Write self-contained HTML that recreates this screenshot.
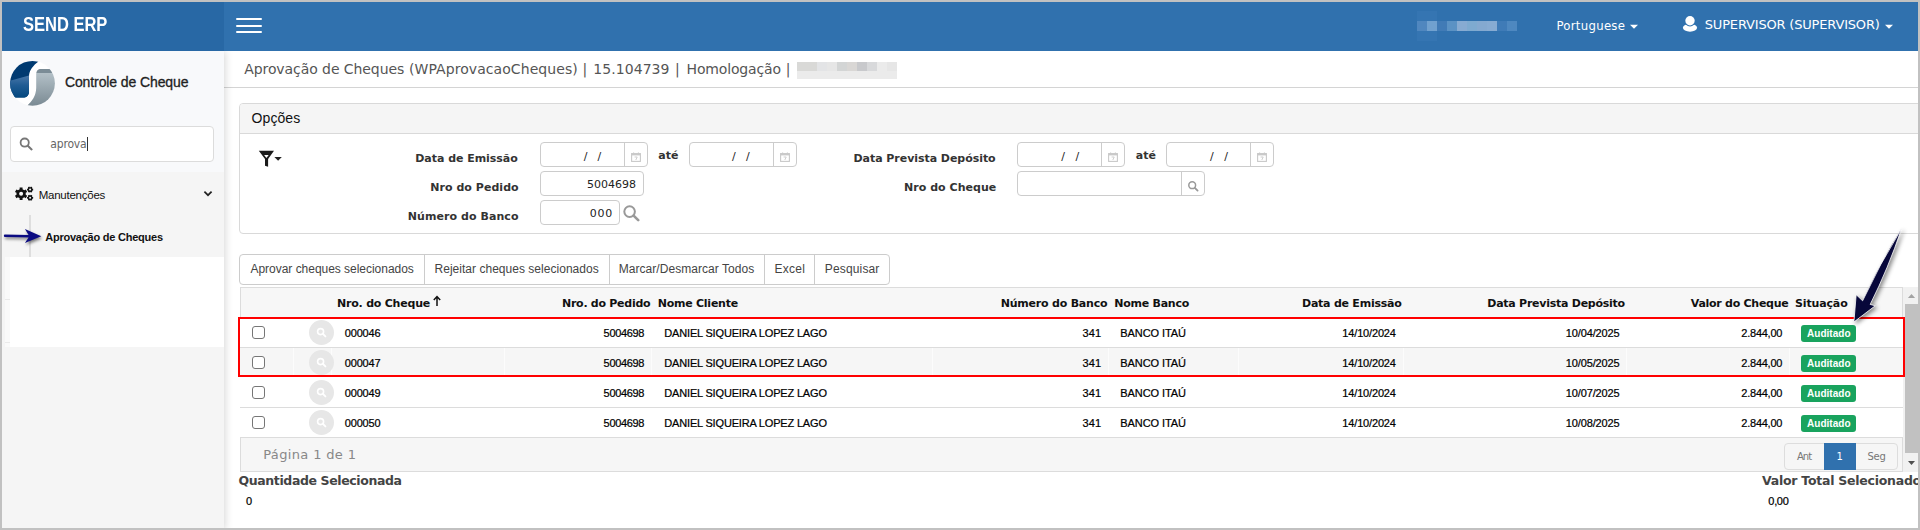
<!DOCTYPE html>
<html lang="pt-BR">
<head>
<meta charset="utf-8">
<title>SEND ERP - Aprovação de Cheques</title>
<style>
html,body{margin:0;padding:0}
body{width:1920px;height:530px;overflow:hidden;position:relative;background:#fff;font-family:"Liberation Sans",sans-serif}
*{box-sizing:border-box}
.a{position:absolute}
.t{position:absolute;white-space:pre;line-height:0;margin:0;padding:0;font-style:normal}
h1.t,h2.t{font-weight:normal}
h1.ttl{position:absolute;left:0;top:0;margin:0;font-weight:normal;font-size:14px}
.frame{position:absolute;left:0;top:0;width:1920px;height:530px;border:2px solid #c1c1c1;z-index:100;pointer-events:none}
header{position:absolute;left:0;top:0;width:1920px;height:51px;background:#3071ae;z-index:5}
.brand{position:absolute;left:0;top:0;width:224px;height:51px;background:#2868a5}
.burger{position:absolute;left:236px;top:18px;width:26px;height:15px;border:0;padding:0;background:none}
.burger i{position:absolute;left:0;width:26px;height:2px;background:#fff;border-radius:1px}
aside{position:absolute;left:0;top:51px;width:224px;height:479px;background:#f5f5f5;box-shadow:1px 0 8px rgba(0,0,0,.17);z-index:4}
.side-top{position:absolute;left:0;top:0;width:224px;height:121px;background:#f8f9fb}
.search{position:absolute;left:10px;top:75px;width:204px;height:36px;background:#fff;border:1px solid #dcdcdc;border-radius:4px}
.blank{position:absolute;left:10px;top:206px;width:214px;height:90px;background:#fff}
.subline{position:absolute;left:29px;top:164px;width:2px;height:42px;background:#dedede}
main{position:absolute;left:0;top:0;width:1920px;height:530px}
.titlebar{position:absolute;left:224px;top:87px;width:1696px;height:1px;background:#d4d4d4}
.panel{position:absolute;left:239px;top:103px;width:1690px;height:131px;border:1px solid #d9d9d9;border-radius:4px;background:#fff}
.panel-h{position:absolute;left:0;top:0;width:100%;height:30px;background:#f5f5f5;border-bottom:1px solid #d9d9d9;border-radius:3px 3px 0 0}
.inp{position:absolute;height:25px;border:1px solid #ccc;border-radius:4px;background:#fff}
.inp b{position:absolute;top:0;width:1px;height:23px;background:#ccc}
.btns{position:absolute;left:239px;top:254px;width:651px;height:31px;border:1px solid #ccc;border-radius:4px;background:#fff}
.btns i{position:absolute;top:0;width:1px;height:29px;background:#ccc}
.grid{position:absolute;left:240px;top:287px;width:1663px;height:185px;background:#fff}
.grid .hd{position:absolute;left:0;top:0;width:1663px;height:31px;background:#f7f7f7;border:1px solid #dcdcdc;border-bottom:0}
.row{position:absolute;left:0;width:1663px;border-bottom:1px solid #dcdcdc}
.row.alt{background:#f6f6f6}
.row.alt u{position:absolute;top:0;width:1px;height:27px;background:#fcfcfc}
.ck{position:absolute;left:252px;width:13px;height:13px;border:1px solid #767676;border-radius:3px;background:#fff;margin:0;padding:0;appearance:none;-webkit-appearance:none}
.circ{position:absolute;left:309px;width:25px;height:25px;border-radius:50%;background:#e7e7e7}
.badge{position:absolute;left:1801px;width:55px;height:17px;border-radius:3px;background:#19a35e}
.foot{position:absolute;left:0;top:150px;width:1663px;height:35px;background:#f6f6f6;border:1px solid #dcdcdc}
.pager{position:absolute;left:1784px;top:443px;width:114px;height:27px;border:1px solid #ddd;border-radius:4px;background:#f6f6f6}
.pager em{position:absolute;left:39px;top:-1px;width:32px;height:27px;background:#3071ae}
.redbox{position:absolute;left:238px;top:317px;width:1667px;height:60px;border:2px solid #ff0000;z-index:3}
.sb{position:absolute;left:1903px;top:287px;width:15px;height:185px;background:#f1f1f1}
.sb .th{position:absolute;left:2px;top:17px;width:13px;height:149px;background:#c1c1c1}
.pix i{position:absolute;width:10px}
</style>
</head>
<body>
<main>
  <div class="titlebar"></div>
  <h1 class="ttl">
<span id="t7" class="t" style="left:244.20px;top:69.25px;font-family:'DejaVu Sans',sans-serif;font-size:14px;font-weight:normal;color:#555;letter-spacing:-0.074px;">Aprovação de Cheques</span>
<span id="t8" class="t" style="left:409.00px;top:69.25px;font-family:'DejaVu Sans',sans-serif;font-size:14px;font-weight:normal;color:#555;letter-spacing:0.068px;">(WPAprovacaoCheques)</span>
<span id="t9" class="t" style="left:582.50px;top:69.25px;font-family:'DejaVu Sans',sans-serif;font-size:14px;font-weight:normal;color:#555;letter-spacing:1.500px;">|</span>
<span id="t10" class="t" style="left:593.30px;top:69.25px;font-family:'DejaVu Sans',sans-serif;font-size:14px;font-weight:normal;color:#555;letter-spacing:0.062px;">15.104739</span>
<span id="t11" class="t" style="left:675.00px;top:69.25px;font-family:'DejaVu Sans',sans-serif;font-size:14px;font-weight:normal;color:#555;letter-spacing:1.500px;">|</span>
<span id="t12" class="t" style="left:686.50px;top:69.25px;font-family:'DejaVu Sans',sans-serif;font-size:14px;font-weight:normal;color:#555;letter-spacing:-0.150px;">Homologação</span>
<span id="t13" class="t" style="left:785.80px;top:69.25px;font-family:'DejaVu Sans',sans-serif;font-size:14px;font-weight:normal;color:#555;letter-spacing:1.500px;">|</span>
  </h1>
  <div class="pix" aria-hidden="true">
    <i style="left:797px;top:62px;height:9px;background:#d9d9d7"></i><i style="left:807px;top:62px;height:9px;background:#d9d9d7"></i><i style="left:817px;top:62px;height:9px;background:#e3e4e6"></i><i style="left:827px;top:62px;height:9px;background:#e6e6e6"></i><i style="left:837px;top:62px;height:9px;background:#d3d5d5"></i><i style="left:847px;top:62px;height:9px;background:#d9d7d5"></i><i style="left:857px;top:62px;height:9px;background:#c8c9cc"></i><i style="left:867px;top:62px;height:9px;background:#d8d9db"></i><i style="left:877px;top:62px;height:9px;background:#ebebeb"></i><i style="left:887px;top:62px;height:9px;background:#e6e6e6"></i>
    <i style="left:797px;top:71px;height:8px;width:100px;background:#ebebeb"></i>
  </div>
  <section class="panel">
    <div class="panel-h"></div>
  </section>
  <!-- filter icon -->
  <svg class="a" style="left:258px;top:150px" width="26" height="18" viewBox="0 0 26 18">
    <path d="M0.8 0.8 H16 L10.1 9 V16.7 L7 15.7 V9 Z" fill="#1a1a1a"/>
    <path d="M6.1 5 H10.7 L8.4 8 Z" fill="#fff"/>
    <path d="M16.4 6.9 H23.8 L20.1 10.7 Z" fill="#222"/>
  </svg>
  <!-- inputs -->
  <div class="inp" style="left:540px;top:142px;width:108px"><b style="left:83px"></b></div>
  <div class="inp" style="left:689px;top:142px;width:108px"><b style="left:83px"></b></div>
  <div class="inp" style="left:1017px;top:142px;width:108px"><b style="left:83px"></b></div>
  <div class="inp" style="left:1166px;top:142px;width:108px"><b style="left:83px"></b></div>
  <div class="inp" style="left:540px;top:171px;width:104px"></div>
  <div class="inp" style="left:540px;top:200px;width:80px"></div>
  <div class="inp" style="left:1017px;top:171px;width:188px"><b style="left:163px"></b></div>
  <!-- calendar icons -->
  <svg class="a cal" style="left:630px;top:152px" width="12" height="10" viewBox="0 0 12 10"><use href="#cal"/></svg>
  <svg class="a cal" style="left:779px;top:152px" width="12" height="10" viewBox="0 0 12 10"><use href="#cal"/></svg>
  <svg class="a cal" style="left:1107px;top:152px" width="12" height="10" viewBox="0 0 12 10"><use href="#cal"/></svg>
  <svg class="a cal" style="left:1256px;top:152px" width="12" height="10" viewBox="0 0 12 10"><use href="#cal"/></svg>
  <!-- magnifiers -->
  <svg class="a" style="left:622px;top:204px" width="18" height="18" viewBox="0 0 18 18"><circle cx="7.6" cy="7.6" r="5.3" fill="none" stroke="#999" stroke-width="2"/><path d="M11.6 11.6 L16.2 16.2" stroke="#999" stroke-width="2.6" stroke-linecap="round"/></svg>
  <svg class="a" style="left:1187px;top:180px" width="12" height="12" viewBox="0 0 12 12"><circle cx="5.2" cy="5.2" r="3.4" fill="none" stroke="#999" stroke-width="1.5"/><path d="M7.8 7.8 L10.6 10.6" stroke="#999" stroke-width="1.8" stroke-linecap="round"/></svg>
  <!-- buttons -->
  <div class="btns"><i style="left:184px"></i><i style="left:369px"></i><i style="left:524px"></i><i style="left:574px"></i></div>
  <!-- grid -->
  <div class="grid">
    <div class="hd"></div>
    <div class="row" style="top:32px;height:29px"></div>
    <div class="row alt" style="top:61px;height:29px"><u style="left:53px"></u><u style="left:91px"></u><u style="left:264px"></u><u style="left:411px"></u><u style="left:692px"></u><u style="left:868px"></u><u style="left:998px"></u><u style="left:1163px"></u><u style="left:1386px"></u><u style="left:1549px"></u></div>
    <div class="row" style="top:90px;height:31px"></div>
    <div class="row" style="top:121px;height:30px"></div>
    <div class="foot"></div>
  </div>
  <div class="redbox"></div>
  <input type="checkbox" class="ck" style="top:326px"><input type="checkbox" class="ck" style="top:356px"><input type="checkbox" class="ck" style="top:386px"><input type="checkbox" class="ck" style="top:416px">
  <div class="circ" style="top:320px"><svg width="25" height="25" viewBox="0 0 25 25"><use href="#mg"/></svg></div>
  <div class="circ" style="top:350px"><svg width="25" height="25" viewBox="0 0 25 25"><use href="#mg"/></svg></div>
  <div class="circ" style="top:380px"><svg width="25" height="25" viewBox="0 0 25 25"><use href="#mg"/></svg></div>
  <div class="circ" style="top:410px"><svg width="25" height="25" viewBox="0 0 25 25"><use href="#mg"/></svg></div>
  <div class="badge" style="top:325px"></div><div class="badge" style="top:355px"></div><div class="badge" style="top:385px"></div><div class="badge" style="top:415px"></div>
  <div class="pager"><em></em></div>
  <div class="sb"><div class="th"></div>
    <svg class="a" style="left:2px;top:0" width="13" height="185" viewBox="0 0 13 185"><path d="M2.9 11 L6.5 7 L10.1 11 Z" fill="#a3a3a3"/><path d="M3 174 L10 174 L6.5 178 Z" fill="#505050"/></svg>
  </div>
  <!-- sort arrow -->
  <svg class="a" style="left:432px;top:295px" width="10" height="12" viewBox="0 0 10 12"><path d="M5 11 V2 M1.8 5 L5 1.6 L8.2 5" fill="none" stroke="#111" stroke-width="1.5"/></svg>
<h2 id="t14" class="t" style="left:251.50px;top:118.00px;font-family:'Liberation Sans',sans-serif;font-size:14px;font-weight:normal;color:#111;letter-spacing:0.100px;">Opções</h2>
<label id="t15" class="t" style="left:415.25px;top:159.00px;font-family:'DejaVu Sans',sans-serif;font-size:11px;font-weight:bold;color:#333;letter-spacing:-0.036px;">Data de Emissão</label>
<label id="t16" class="t" style="left:430.25px;top:188.00px;font-family:'DejaVu Sans',sans-serif;font-size:11px;font-weight:bold;color:#333;letter-spacing:0.042px;">Nro do Pedido</label>
<label id="t17" class="t" style="left:407.75px;top:216.75px;font-family:'DejaVu Sans',sans-serif;font-size:11px;font-weight:bold;color:#333;letter-spacing:0.071px;">Número do Banco</label>
<label id="t18" class="t" style="left:853.50px;top:159.00px;font-family:'DejaVu Sans',sans-serif;font-size:11px;font-weight:bold;color:#333;letter-spacing:-0.048px;">Data Prevista Depósito</label>
<label id="t19" class="t" style="left:904.00px;top:188.00px;font-family:'DejaVu Sans',sans-serif;font-size:11px;font-weight:bold;color:#333;letter-spacing:0.042px;">Nro do Cheque</label>
<span id="t20" class="t" style="left:658.25px;top:156.25px;font-family:'DejaVu Sans',sans-serif;font-size:11px;font-weight:bold;color:#333;">até</span>
<span id="t21" class="t" style="left:1135.75px;top:156.25px;font-family:'DejaVu Sans',sans-serif;font-size:11px;font-weight:bold;color:#333;">até</span>
<span id="t22" class="t" style="left:583.75px;top:157.00px;font-family:'DejaVu Sans',sans-serif;font-size:11px;font-weight:normal;color:#222;letter-spacing:1.000px;">/  /</span>
<span id="t23" class="t" style="left:732.00px;top:157.00px;font-family:'DejaVu Sans',sans-serif;font-size:11px;font-weight:normal;color:#222;letter-spacing:1.083px;">/  /</span>
<span id="t24" class="t" style="left:1061.25px;top:157.00px;font-family:'DejaVu Sans',sans-serif;font-size:11px;font-weight:normal;color:#222;letter-spacing:1.167px;">/  /</span>
<span id="t25" class="t" style="left:1210.00px;top:157.00px;font-family:'DejaVu Sans',sans-serif;font-size:11px;font-weight:normal;color:#222;letter-spacing:1.167px;">/  /</span>
<span id="t26" class="t" style="left:587.00px;top:185.00px;font-family:'DejaVu Sans',sans-serif;font-size:11px;font-weight:normal;color:#222;">5004698</span>
<span id="t27" class="t" style="left:589.75px;top:213.75px;font-family:'DejaVu Sans',sans-serif;font-size:11px;font-weight:normal;color:#222;letter-spacing:0.750px;">000</span>
<span id="t28" class="t" style="left:250.50px;top:268.75px;font-family:'Liberation Sans',sans-serif;font-size:12px;font-weight:normal;color:#444;letter-spacing:-0.028px;">Aprovar cheques selecionados</span>
<span id="t29" class="t" style="left:434.50px;top:268.75px;font-family:'Liberation Sans',sans-serif;font-size:12px;font-weight:normal;color:#444;letter-spacing:0.027px;">Rejeitar cheques selecionados</span>
<span id="t30" class="t" style="left:618.75px;top:268.75px;font-family:'Liberation Sans',sans-serif;font-size:12px;font-weight:normal;color:#444;letter-spacing:0.048px;">Marcar/Desmarcar Todos</span>
<span id="t31" class="t" style="left:774.50px;top:268.75px;font-family:'Liberation Sans',sans-serif;font-size:12px;font-weight:normal;color:#444;letter-spacing:0.250px;">Excel</span>
<span id="t32" class="t" style="left:824.75px;top:268.75px;font-family:'Liberation Sans',sans-serif;font-size:12px;font-weight:normal;color:#444;letter-spacing:0.156px;">Pesquisar</span>
<span id="t33" class="t th" style="left:337.00px;top:303.75px;font-family:'DejaVu Sans',sans-serif;font-size:11px;font-weight:bold;color:#111;letter-spacing:-0.212px;">Nro. do Cheque</span>
<span id="t34" class="t th" style="left:562.00px;top:303.75px;font-family:'DejaVu Sans',sans-serif;font-size:11px;font-weight:bold;color:#111;letter-spacing:-0.269px;">Nro. do Pedido</span>
<span id="t35" class="t th" style="left:657.75px;top:303.75px;font-family:'DejaVu Sans',sans-serif;font-size:11px;font-weight:bold;color:#111;letter-spacing:-0.250px;">Nome Cliente</span>
<span id="t36" class="t th" style="left:1000.75px;top:303.75px;font-family:'DejaVu Sans',sans-serif;font-size:11px;font-weight:bold;color:#111;letter-spacing:-0.214px;">Número do Banco</span>
<span id="t37" class="t th" style="left:1114.25px;top:303.75px;font-family:'DejaVu Sans',sans-serif;font-size:11px;font-weight:bold;color:#111;letter-spacing:-0.250px;">Nome Banco</span>
<span id="t38" class="t th" style="left:1302.00px;top:303.75px;font-family:'DejaVu Sans',sans-serif;font-size:11px;font-weight:bold;color:#111;letter-spacing:-0.232px;">Data de Emissão</span>
<span id="t39" class="t th" style="left:1487.25px;top:303.75px;font-family:'DejaVu Sans',sans-serif;font-size:11px;font-weight:bold;color:#111;letter-spacing:-0.250px;">Data Prevista Depósito</span>
<span id="t40" class="t th" style="left:1690.75px;top:303.75px;font-family:'DejaVu Sans',sans-serif;font-size:11px;font-weight:bold;color:#111;letter-spacing:-0.268px;">Valor do Cheque</span>
<span id="t41" class="t th" style="left:1795.00px;top:303.75px;font-family:'DejaVu Sans',sans-serif;font-size:11px;font-weight:bold;color:#111;letter-spacing:-0.143px;">Situação</span>
<span id="t42" class="t" style="left:344.85px;top:333.00px;font-family:'Liberation Sans',sans-serif;font-size:11px;font-weight:normal;color:#000;-webkit-text-stroke:0.22px #000;letter-spacing:-0.200px;">000046</span>
<span id="t43" class="t" style="left:603.60px;top:333.00px;font-family:'Liberation Sans',sans-serif;font-size:11px;font-weight:normal;color:#000;-webkit-text-stroke:0.22px #000;letter-spacing:-0.333px;">5004698</span>
<span id="t44" class="t" style="left:664.35px;top:333.00px;font-family:'Liberation Sans',sans-serif;font-size:11px;font-weight:normal;color:#000;-webkit-text-stroke:0.22px #000;letter-spacing:-0.180px;">DANIEL SIQUEIRA LOPEZ LAGO</span>
<span id="t45" class="t" style="left:1082.60px;top:333.00px;font-family:'Liberation Sans',sans-serif;font-size:11px;font-weight:normal;color:#000;-webkit-text-stroke:0.22px #000;letter-spacing:0.125px;">341</span>
<span id="t46" class="t" style="left:1120.35px;top:333.00px;font-family:'Liberation Sans',sans-serif;font-size:11px;font-weight:normal;color:#000;-webkit-text-stroke:0.22px #000;letter-spacing:-0.083px;">BANCO ITAÚ</span>
<span id="t47" class="t" style="left:1342.35px;top:333.00px;font-family:'Liberation Sans',sans-serif;font-size:11px;font-weight:normal;color:#000;-webkit-text-stroke:0.22px #000;letter-spacing:-0.167px;">14/10/2024</span>
<span id="t48" class="t" style="left:1565.85px;top:333.00px;font-family:'Liberation Sans',sans-serif;font-size:11px;font-weight:normal;color:#000;-webkit-text-stroke:0.22px #000;letter-spacing:-0.139px;">10/04/2025</span>
<span id="t49" class="t" style="left:1741.35px;top:333.00px;font-family:'Liberation Sans',sans-serif;font-size:11px;font-weight:normal;color:#000;-webkit-text-stroke:0.22px #000;letter-spacing:-0.250px;">2.844,00</span>
<span id="t50" class="t" style="left:1807.00px;top:334.00px;font-family:'Liberation Sans',sans-serif;font-size:10px;font-weight:bold;color:#fff;letter-spacing:0.036px;">Auditado</span>
<span id="t51" class="t" style="left:344.85px;top:363.00px;font-family:'Liberation Sans',sans-serif;font-size:11px;font-weight:normal;color:#000;-webkit-text-stroke:0.22px #000;letter-spacing:-0.200px;">000047</span>
<span id="t52" class="t" style="left:603.60px;top:363.00px;font-family:'Liberation Sans',sans-serif;font-size:11px;font-weight:normal;color:#000;-webkit-text-stroke:0.22px #000;letter-spacing:-0.333px;">5004698</span>
<span id="t53" class="t" style="left:664.35px;top:363.00px;font-family:'Liberation Sans',sans-serif;font-size:11px;font-weight:normal;color:#000;-webkit-text-stroke:0.22px #000;letter-spacing:-0.180px;">DANIEL SIQUEIRA LOPEZ LAGO</span>
<span id="t54" class="t" style="left:1082.60px;top:363.00px;font-family:'Liberation Sans',sans-serif;font-size:11px;font-weight:normal;color:#000;-webkit-text-stroke:0.22px #000;letter-spacing:0.125px;">341</span>
<span id="t55" class="t" style="left:1120.35px;top:363.00px;font-family:'Liberation Sans',sans-serif;font-size:11px;font-weight:normal;color:#000;-webkit-text-stroke:0.22px #000;letter-spacing:-0.083px;">BANCO ITAÚ</span>
<span id="t56" class="t" style="left:1342.35px;top:363.00px;font-family:'Liberation Sans',sans-serif;font-size:11px;font-weight:normal;color:#000;-webkit-text-stroke:0.22px #000;letter-spacing:-0.167px;">14/10/2024</span>
<span id="t57" class="t" style="left:1565.85px;top:363.00px;font-family:'Liberation Sans',sans-serif;font-size:11px;font-weight:normal;color:#000;-webkit-text-stroke:0.22px #000;letter-spacing:-0.139px;">10/05/2025</span>
<span id="t58" class="t" style="left:1741.35px;top:363.00px;font-family:'Liberation Sans',sans-serif;font-size:11px;font-weight:normal;color:#000;-webkit-text-stroke:0.22px #000;letter-spacing:-0.250px;">2.844,00</span>
<span id="t59" class="t" style="left:1807.00px;top:364.00px;font-family:'Liberation Sans',sans-serif;font-size:10px;font-weight:bold;color:#fff;letter-spacing:0.036px;">Auditado</span>
<span id="t60" class="t" style="left:344.85px;top:393.00px;font-family:'Liberation Sans',sans-serif;font-size:11px;font-weight:normal;color:#000;-webkit-text-stroke:0.22px #000;letter-spacing:-0.200px;">000049</span>
<span id="t61" class="t" style="left:603.60px;top:393.00px;font-family:'Liberation Sans',sans-serif;font-size:11px;font-weight:normal;color:#000;-webkit-text-stroke:0.22px #000;letter-spacing:-0.333px;">5004698</span>
<span id="t62" class="t" style="left:664.35px;top:393.00px;font-family:'Liberation Sans',sans-serif;font-size:11px;font-weight:normal;color:#000;-webkit-text-stroke:0.22px #000;letter-spacing:-0.180px;">DANIEL SIQUEIRA LOPEZ LAGO</span>
<span id="t63" class="t" style="left:1082.60px;top:393.00px;font-family:'Liberation Sans',sans-serif;font-size:11px;font-weight:normal;color:#000;-webkit-text-stroke:0.22px #000;letter-spacing:0.125px;">341</span>
<span id="t64" class="t" style="left:1120.35px;top:393.00px;font-family:'Liberation Sans',sans-serif;font-size:11px;font-weight:normal;color:#000;-webkit-text-stroke:0.22px #000;letter-spacing:-0.083px;">BANCO ITAÚ</span>
<span id="t65" class="t" style="left:1342.35px;top:393.00px;font-family:'Liberation Sans',sans-serif;font-size:11px;font-weight:normal;color:#000;-webkit-text-stroke:0.22px #000;letter-spacing:-0.167px;">14/10/2024</span>
<span id="t66" class="t" style="left:1565.85px;top:393.00px;font-family:'Liberation Sans',sans-serif;font-size:11px;font-weight:normal;color:#000;-webkit-text-stroke:0.22px #000;letter-spacing:-0.139px;">10/07/2025</span>
<span id="t67" class="t" style="left:1741.35px;top:393.00px;font-family:'Liberation Sans',sans-serif;font-size:11px;font-weight:normal;color:#000;-webkit-text-stroke:0.22px #000;letter-spacing:-0.250px;">2.844,00</span>
<span id="t68" class="t" style="left:1807.00px;top:394.00px;font-family:'Liberation Sans',sans-serif;font-size:10px;font-weight:bold;color:#fff;letter-spacing:0.036px;">Auditado</span>
<span id="t69" class="t" style="left:344.85px;top:423.00px;font-family:'Liberation Sans',sans-serif;font-size:11px;font-weight:normal;color:#000;-webkit-text-stroke:0.22px #000;letter-spacing:-0.200px;">000050</span>
<span id="t70" class="t" style="left:603.60px;top:423.00px;font-family:'Liberation Sans',sans-serif;font-size:11px;font-weight:normal;color:#000;-webkit-text-stroke:0.22px #000;letter-spacing:-0.333px;">5004698</span>
<span id="t71" class="t" style="left:664.35px;top:423.00px;font-family:'Liberation Sans',sans-serif;font-size:11px;font-weight:normal;color:#000;-webkit-text-stroke:0.22px #000;letter-spacing:-0.180px;">DANIEL SIQUEIRA LOPEZ LAGO</span>
<span id="t72" class="t" style="left:1082.60px;top:423.00px;font-family:'Liberation Sans',sans-serif;font-size:11px;font-weight:normal;color:#000;-webkit-text-stroke:0.22px #000;letter-spacing:0.125px;">341</span>
<span id="t73" class="t" style="left:1120.35px;top:423.00px;font-family:'Liberation Sans',sans-serif;font-size:11px;font-weight:normal;color:#000;-webkit-text-stroke:0.22px #000;letter-spacing:-0.083px;">BANCO ITAÚ</span>
<span id="t74" class="t" style="left:1342.35px;top:423.00px;font-family:'Liberation Sans',sans-serif;font-size:11px;font-weight:normal;color:#000;-webkit-text-stroke:0.22px #000;letter-spacing:-0.167px;">14/10/2024</span>
<span id="t75" class="t" style="left:1565.85px;top:423.00px;font-family:'Liberation Sans',sans-serif;font-size:11px;font-weight:normal;color:#000;-webkit-text-stroke:0.22px #000;letter-spacing:-0.139px;">10/08/2025</span>
<span id="t76" class="t" style="left:1741.35px;top:423.00px;font-family:'Liberation Sans',sans-serif;font-size:11px;font-weight:normal;color:#000;-webkit-text-stroke:0.22px #000;letter-spacing:-0.250px;">2.844,00</span>
<span id="t77" class="t" style="left:1807.00px;top:424.00px;font-family:'Liberation Sans',sans-serif;font-size:10px;font-weight:bold;color:#fff;letter-spacing:0.036px;">Auditado</span>
<span id="t78" class="t" style="left:263.25px;top:455.25px;font-family:'DejaVu Sans',sans-serif;font-size:13px;font-weight:normal;color:#888;letter-spacing:0.354px;">Página 1 de 1</span>
<span id="t79" class="t" style="left:1797.00px;top:457.00px;font-family:'DejaVu Sans',sans-serif;font-size:10px;font-weight:normal;color:#777;letter-spacing:-1.000px;">Ant</span>
<span id="t80" class="t" style="left:1836.50px;top:457.00px;font-family:'DejaVu Sans',sans-serif;font-size:10px;font-weight:normal;color:#fff;">1</span>
<span id="t81" class="t" style="left:1867.50px;top:457.00px;font-family:'DejaVu Sans',sans-serif;font-size:10px;font-weight:normal;color:#777;letter-spacing:-0.250px;">Seg</span>
<span id="t82" class="t" style="left:238.50px;top:481.00px;font-family:'DejaVu Sans',sans-serif;font-size:12.5px;font-weight:bold;color:#444;letter-spacing:-0.381px;">Quantidade Selecionada</span>
<span id="t83" class="t" style="left:1762.00px;top:481.00px;font-family:'DejaVu Sans',sans-serif;font-size:12.5px;font-weight:bold;color:#444;letter-spacing:-0.252px;">Valor Total Selecionado</span>
<span id="t84" class="t" style="left:246.10px;top:501.00px;font-family:'Liberation Sans',sans-serif;font-size:11px;font-weight:normal;color:#000;-webkit-text-stroke:0.22px #000;letter-spacing:-1.000px;">0</span>
<span id="t85" class="t" style="left:1768.35px;top:501.00px;font-family:'Liberation Sans',sans-serif;font-size:11px;font-weight:normal;color:#000;-webkit-text-stroke:0.22px #000;letter-spacing:-0.333px;">0,00</span>
  <!-- annotation arrow -->
  <svg class="a" style="left:1830px;top:215px;z-index:6;filter:drop-shadow(2px 2px 2px rgba(0,0,0,.45))" width="90" height="120" viewBox="1830 215 90 120">
    <path d="M1901.6 228.6 Q1879.6 264 1862.6 300.8 L1856.2 294.7 L1853.9 322 L1875.2 305.8 L1870.2 304.4 Q1888.2 268.4 1901.6 228.6 Z" fill="#07073a" stroke="#fff" stroke-width="0.8" stroke-linejoin="round"/>
  </svg>
</main>
<header>
  <div class="brand">
<span id="t0" class="t" style="left:23.21px;top:23.90px;font-family:'Liberation Sans',sans-serif;font-size:19.7px;font-weight:bold;color:#fff;transform:scaleX(0.8384);transform-origin:0 0;">SEND ERP</span>
  </div>
  <button class="burger" aria-label="menu"><i style="top:0"></i><i style="top:6.5px"></i><i style="top:13px"></i></button>
  <div class="pix" aria-hidden="true">
    <i style="left:1417px;top:11px;width:20px;height:10px;background:#3575b2"></i><i style="left:1417px;top:31px;width:20px;height:10px;background:#3575b2"></i>
    <i style="left:1417px;top:21px;height:10px;background:#5087bf"></i><i style="left:1427px;top:21px;height:10px;background:#71a1cf"></i><i style="left:1437px;top:21px;height:10px;background:#417bb6"></i><i style="left:1447px;top:21px;height:10px;background:#5b92c4"></i><i style="left:1457px;top:21px;height:10px;background:#87abd2"></i><i style="left:1467px;top:21px;height:10px;background:#7eaad0"></i><i style="left:1477px;top:21px;height:10px;background:#84a9d0"></i><i style="left:1487px;top:21px;height:10px;background:#87abd2"></i><i style="left:1497px;top:21px;height:10px;background:#3f7bb7"></i><i style="left:1507px;top:21px;height:10px;background:#4e88c0"></i>
  </div>
  <svg class="a" style="left:1629px;top:24px" width="10" height="6" viewBox="0 0 10 6"><path d="M1 0.8 H9 L5 4.8 Z" fill="#fff"/></svg>
  <svg class="a" style="left:1884px;top:24px" width="10" height="6" viewBox="0 0 10 6"><path d="M1 0.8 H9 L5 4.8 Z" fill="#fff"/></svg>
  <svg class="a" style="left:1682px;top:15px" width="16" height="18" viewBox="0 0 16 18"><ellipse cx="8" cy="12.8" rx="7.1" ry="3.9" fill="#fff"/><circle cx="8" cy="5.8" r="5.6" fill="#3071ae"/><circle cx="8" cy="5.8" r="4.7" fill="#fff"/></svg>
<span id="t1" class="t" style="left:1556.40px;top:25.60px;font-family:'DejaVu Sans Condensed',sans-serif;font-size:13px;font-weight:normal;color:#fff;letter-spacing:0.300px;">Portuguese</span>
<span id="t2" class="t" style="left:1704.80px;top:25.40px;font-family:'DejaVu Sans',sans-serif;font-size:13px;font-weight:normal;color:#fff;letter-spacing:-0.182px;">SUPERVISOR (SUPERVISOR)</span>
</header>
<aside>
  <div class="side-top"></div>
  <!-- logo -->
  <svg class="a" style="left:9px;top:9px" width="47" height="47" viewBox="9 60 47 47">
    <defs>
      <linearGradient id="lb" x1="0" y1="0" x2="0" y2="1"><stop offset="0" stop-color="#4877a9"/><stop offset=".45" stop-color="#1f5b93"/><stop offset="1" stop-color="#04487f"/></linearGradient>
      <linearGradient id="lg" x1="0" y1="0" x2="0" y2="1"><stop offset="0" stop-color="#7b8c96"/><stop offset=".1" stop-color="#7b8c96"/><stop offset=".11" stop-color="#b3c0c7"/><stop offset="1" stop-color="#7a8a93"/></linearGradient>
      <clipPath id="lc"><circle cx="32.5" cy="83.3" r="22.4"/></clipPath>
    </defs>
    <circle cx="32.5" cy="83.3" r="22.4" fill="#fff"/>
    <g clip-path="url(#lc)">
      <path d="M8 58 H43 C35.5 63.5 29 68.5 29 76.5 V90 C29.5 95 27 97.6 23 97.6 H8 Z" fill="#003a71"/>
      <path d="M8 81.4 L29 75.4 V90 C29.5 95 27 97.6 23 97.6 H8 Z" fill="url(#lb)"/>
      <path d="M57 69 H40 C37 69.5 36.2 72 36.2 75 V88 C36 96 32 101 27 106 H57 Z" fill="url(#lg)"/>
    </g>
  </svg>
  <div class="search"></div>
  <svg class="a" style="left:19px;top:86px" width="14" height="14" viewBox="0 0 14 14"><circle cx="5.7" cy="5.6" r="4.1" fill="none" stroke="#777" stroke-width="1.8"/><path d="M8.8 8.8 L12.6 12.4" stroke="#777" stroke-width="2" stroke-linecap="round"/></svg>
  <div class="a" style="left:87px;top:86px;width:1px;height:14px;background:#333"></div>
  <!-- gears -->
  <svg class="a" style="left:14px;top:135px" width="21" height="17" viewBox="14 186 21 17">
    <path d="M22.55 198.27 L22.56 200.03 L19.64 200.03 L19.65 198.27 L17.96 197.29 L16.43 198.18 L14.97 195.65 L16.50 194.78 L16.50 192.82 L14.97 191.95 L16.43 189.42 L17.96 190.31 L19.65 189.33 L19.64 187.57 L22.56 187.57 L22.55 189.33 L24.24 190.31 L25.77 189.42 L27.23 191.95 L25.70 192.82 L25.70 194.78 L27.23 195.65 L25.77 198.18 L24.24 197.29 Z" fill="#111"/><circle cx="21.1" cy="193.8" r="2" fill="#f5f5f5"/>
    <path d="M32.44 188.73 L33.15 188.82 L33.15 190.38 L32.44 190.47 L32.03 191.19 L32.30 191.85 L30.95 192.63 L30.52 192.06 L29.68 192.06 L29.25 192.63 L27.90 191.85 L28.17 191.19 L27.76 190.47 L27.05 190.38 L27.05 188.82 L27.76 188.73 L28.17 188.01 L27.90 187.35 L29.25 186.57 L29.68 187.14 L30.52 187.14 L30.95 186.57 L32.30 187.35 L32.03 188.01 Z" fill="#111"/><circle cx="30.1" cy="189.6" r="1" fill="#f5f5f5"/>
    <path d="M32.44 196.93 L33.15 197.02 L33.15 198.58 L32.44 198.67 L32.03 199.39 L32.30 200.05 L30.95 200.83 L30.52 200.26 L29.68 200.26 L29.25 200.83 L27.90 200.05 L28.17 199.39 L27.76 198.67 L27.05 198.58 L27.05 197.02 L27.76 196.93 L28.17 196.21 L27.90 195.55 L29.25 194.77 L29.68 195.34 L30.52 195.34 L30.95 194.77 L32.30 195.55 L32.03 196.21 Z" fill="#111"/><circle cx="30.1" cy="197.8" r="1" fill="#f5f5f5"/>
  </svg>
  <svg class="a" style="left:203px;top:139px" width="10" height="8" viewBox="0 0 10 8"><path d="M1.4 1.6 L5 5.2 L8.6 1.6" fill="none" stroke="#222" stroke-width="1.7"/></svg>
  <div class="subline"></div>
  <div class="blank"></div>
  <div class="a" style="left:5px;top:206px;width:5px;height:90px;background:#fafafa"><div class="a" style="left:0;top:42px;width:5px;height:1px;background:#eaeaea"></div><div class="a" style="left:0;top:85px;width:5px;height:1px;background:#eaeaea"></div></div>
  <!-- pointer arrow -->
  <svg class="a" style="left:0;top:172px;filter:drop-shadow(1.5px 2px 1.6px rgba(0,0,0,.5))" width="48" height="28" viewBox="0 223 48 28">
    <path d="M4.4 234.5 L28.6 235.1 L24.9 228.9 L41.3 236.2 L24.9 243.1 L28.6 237.5 L4.4 236.9 Q3.2 235.7 4.4 234.5 Z" fill="#0b0b82"/>
  </svg>
<span id="t3" class="t" style="left:64.90px;top:30.90px;font-family:'Liberation Sans',sans-serif;font-size:14px;font-weight:normal;color:#222;-webkit-text-stroke:0.3px #222;letter-spacing:-0.100px;">Controle de Cheque</span>
<span id="t4" class="t" style="left:50.20px;top:92.60px;font-family:'DejaVu Sans Condensed',sans-serif;font-size:12px;font-weight:normal;color:#666;letter-spacing:-0.140px;">aprova</span>
<span id="t5" class="t" style="left:38.75px;top:144.00px;font-family:'Liberation Sans',sans-serif;font-size:11.5px;font-weight:normal;color:#111;letter-spacing:-0.250px;">Manutenções</span>
<span id="t6" class="t" style="left:45.25px;top:186.25px;font-family:'Liberation Sans',sans-serif;font-size:11px;font-weight:bold;color:#111;letter-spacing:-0.237px;">Aprovação de Cheques</span>
</aside>
<svg width="0" height="0" style="position:absolute">
  <defs>
    <g id="cal"><rect x="1.6" y="1.6" width="8.8" height="7.8" fill="none" stroke="#c9c9c9" stroke-width="1.1"/><rect x="1.6" y="1.6" width="8.8" height="1.8" fill="#c9c9c9"/><path d="M3.6 0.5 V2 M8.4 0.5 V2" stroke="#c9c9c9" stroke-width="1.1"/><path d="M4.6 5 H7.2 L5.8 8" fill="none" stroke="#c9c9c9" stroke-width="0.9"/></g>
    <g id="mg"><circle cx="11.6" cy="11.6" r="3" fill="none" stroke="#fff" stroke-width="1.6"/><path d="M13.9 13.9 L16.4 16.4" stroke="#fff" stroke-width="1.9" stroke-linecap="round"/></g>
  </defs>
</svg>
<div class="frame"></div>
</body>
</html>
